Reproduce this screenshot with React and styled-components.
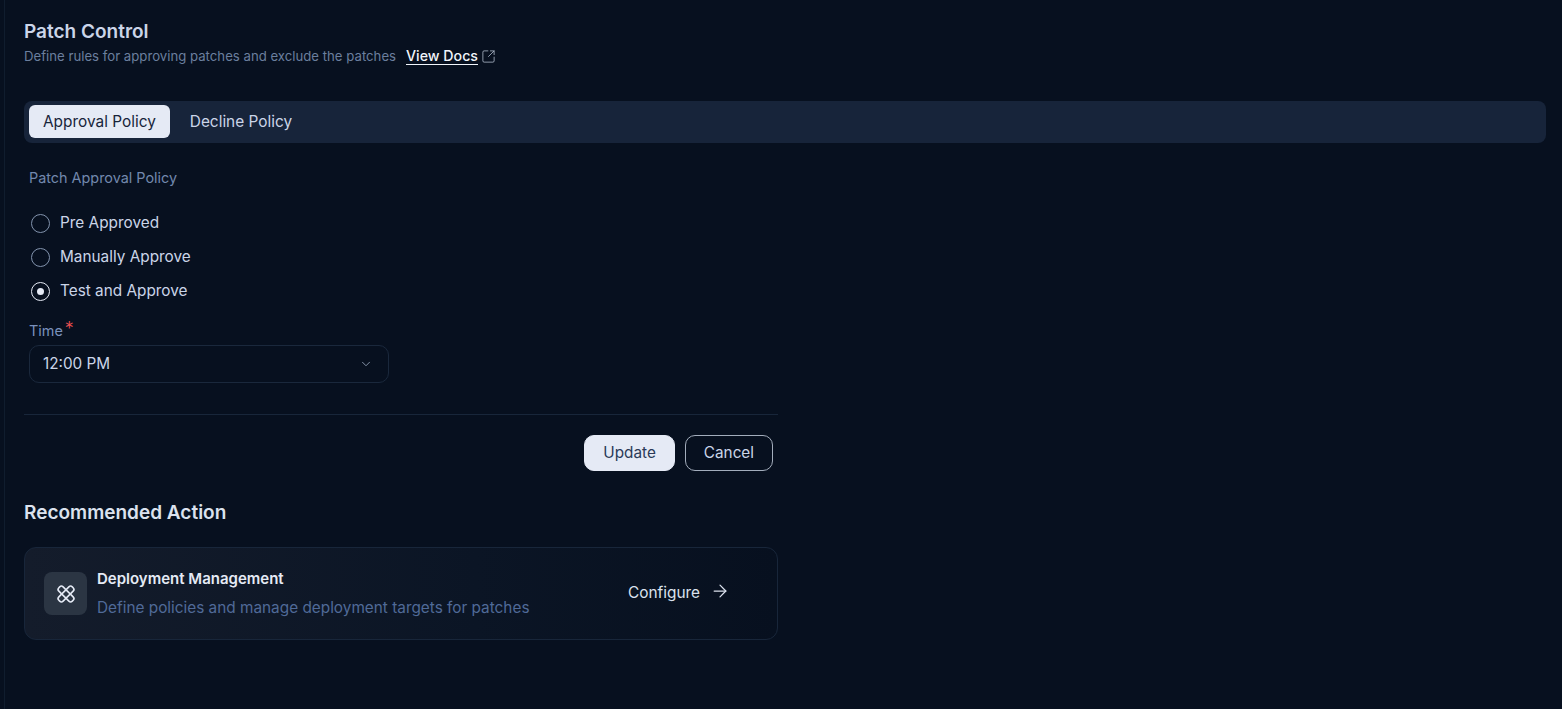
import React from 'react';
import styled, { createGlobalStyle } from 'styled-components';
import { ArrowRight, ChevronDown, SquareArrowOutUpRight } from 'lucide-react';

const GlobalStyle = createGlobalStyle`
  html, body {
    margin: 0;
    padding: 0;
    height: 100%;
    background: #07101f;
  }
  * { box-sizing: border-box; }
  body {
    font-family: Inter, "Liberation Sans", sans-serif;
  }
`;

const options = ['Pre Approved', 'Manually Approve', 'Test and Approve'];

function PatchIcon() {
  return (
    <svg width="20" height="20" viewBox="0 0 20 20" fill="none" stroke="#e5eaf5" strokeWidth="1.6">
      <rect x="-3" y="-9.5" width="6" height="19" rx="2.4" transform="translate(10 10) rotate(45)" />
      <rect x="-3" y="-9.5" width="6" height="19" rx="2.4" transform="translate(10 10) rotate(-45)" />
    </svg>
  );
}

export default function App() {
  return (
    <Page>
      <GlobalStyle />
      <Title>Patch Control</Title>
      <Subtitle>
        Define rules for approving patches and exclude the patches
        <DocsLink href="#">View Docs</DocsLink>
        <SquareArrowOutUpRight size={15} strokeWidth={1.25} color="#b4bfd0" />
      </Subtitle>

      <Tabs>
        <Tab $active>Approval Policy</Tab>
        <Tab>Decline Policy</Tab>
      </Tabs>

      <Form>
        <PolicyLabel>Patch Approval Policy</PolicyLabel>
        <RadioGroup>
          {options.map((option, i) => (
            <RadioRow key={option}>
              <Radio $checked={i === 2} />
              {option}
            </RadioRow>
          ))}
        </RadioGroup>
        <TimeLabel>
          Time<Required>*</Required>
        </TimeLabel>
        <Select>
          12:00 PM
          <ChevronDown size={14} strokeWidth={1.5} color="#94a3b8" />
        </Select>
      </Form>

      <Footer>
        <Button $primary>Update</Button>
        <Button>Cancel</Button>
      </Footer>

      <SectionTitle>Recommended Action</SectionTitle>
      <Card>
        <IconBox>
          <PatchIcon />
        </IconBox>
        <CardText>
          <CardTitle>Deployment Management</CardTitle>
          <CardDesc>Define policies and manage deployment targets for patches</CardDesc>
        </CardText>
        <Configure>
          Configure
          <ArrowRight size={20} strokeWidth={1.5} />
        </Configure>
      </Card>
    </Page>
  );
}

const Page = styled.main`
  min-height: 709px;
  margin-left: 4px;
  padding: 20px 16px 0 19px;
  border-left: 1px solid #101d2e;
  background: #07101f;
`;

const Title = styled.h1`
  margin: 0;
  font-size: 19px;
  line-height: 23px;
  font-weight: 600;
  color: #cbd5e8;
`;

const Subtitle = styled.p`
  display: flex;
  align-items: center;
  margin: 3px 0 0;
  height: 20px;
  font-size: 13.2px;
  color: #6b7f9e;
`;

const DocsLink = styled.a`
  margin: 0 3px 0 10px;
  font-size: 14.2px;
  font-weight: 500;
  line-height: 17px;
  color: #f1f5fb;
  text-decoration: none;
  border-bottom: 1px solid #f1f5fb;
`;

const Tabs = styled.div`
  display: flex;
  gap: 6px;
  margin-top: 35px;
  padding: 4px 5px 5px;
  height: 42px;
  border-radius: 8px;
  background: #17243a;
`;

const Tab = styled.button`
  padding: 0 14px;
  height: 33px;
  border: 0;
  border-radius: 6px;
  font: 400 15.4px Inter, sans-serif;
  color: ${(p) => (p.$active ? '#17243a' : '#cbd5e8')};
  background: ${(p) => (p.$active ? '#e5eaf5' : 'transparent')};
`;

const Form = styled.section`
  padding: 0 0 31px 5px;
  width: 754px;
  border-bottom: 1px solid #18263a;
`;

const PolicyLabel = styled.div`
  margin-top: 26px;
  font-size: 14.4px;
  line-height: 18px;
  color: #7288ad;
`;

const RadioGroup = styled.div`
  display: flex;
  flex-direction: column;
  gap: 10px;
  margin-top: 23px;
  padding-left: 2px;
`;

const RadioRow = styled.label`
  display: flex;
  align-items: center;
  gap: 10px;
  height: 24px;
  font-size: 15.35px;
  color: #cbd5e8;
`;

const Radio = styled.span`
  display: flex;
  align-items: center;
  justify-content: center;
  margin-top: 2px;
  width: 19px;
  height: 19px;
  border-radius: 50%;
  border: 1px solid ${(p) => (p.$checked ? '#e5eaf5' : '#8293ad')};
  &::after {
    content: '';
    display: ${(p) => (p.$checked ? 'block' : 'none')};
    width: 7px;
    height: 7px;
    border-radius: 50%;
    background: #e5eaf5;
  }
`;

const TimeLabel = styled.div`
  margin-top: 19px;
  font-size: 14.4px;
  line-height: 18px;
  color: #7a90bb;
`;

const Required = styled.span`
  position: relative;
  top: -1px;
  margin-left: 2px;
  font-size: 18px;
  font-weight: 300;
  line-height: 1;
  color: #f05252;
`;

const Select = styled.div`
  display: flex;
  align-items: center;
  justify-content: space-between;
  margin-top: 5px;
  padding: 0 15px 1px 13px;
  width: 360px;
  height: 38px;
  border: 1px solid #1a283c;
  border-radius: 10px;
  font-size: 15.3px;
  color: #cbd5e8;
`;

const Footer = styled.div`
  display: flex;
  justify-content: flex-end;
  gap: 10px;
  padding-right: 5px;
  margin-top: 20px;
  width: 754px;
`;

const Button = styled.button`
  padding: 0 18px 2px;
  height: 36px;
  border-radius: 10px;
  border: 1px solid ${(p) => (p.$primary ? '#e5eaf5' : '#a3adbc')};
  font: 400 15.3px Inter, sans-serif;
  color: ${(p) => (p.$primary ? '#2a3a58' : '#cbd5e8')};
  background: ${(p) => (p.$primary ? '#e5eaf5' : 'transparent')};
`;

const SectionTitle = styled.h2`
  margin: 30px 0 0;
  font-size: 19px;
  line-height: 24px;
  font-weight: 600;
  color: #dbe2ee;
`;

const Card = styled.div`
  display: flex;
  align-items: center;
  gap: 10px;
  margin-top: 22px;
  padding: 0 47px 0 19px;
  width: 754px;
  height: 93px;
  border: 1px solid #18263a;
  border-radius: 12px;
  background: linear-gradient(90deg, #141c2b 0%, #0b1525 60%, #07101f 100%);
`;

const IconBox = styled.div`
  display: flex;
  align-items: center;
  justify-content: center;
  width: 43px;
  height: 43px;
  border-radius: 8px;
  background: #2b3543;
`;

const CardText = styled.div`
  display: flex;
  flex-direction: column;
  gap: 10px;
  flex: 1;
  margin-top: 1px;
`;

const CardTitle = styled.div`
  font-size: 15px;
  line-height: 18px;
  font-weight: 600;
  color: #e5eaf5;
`;

const CardDesc = styled.div`
  font-size: 15.35px;
  line-height: 20px;
  color: #506a98;
`;

const Configure = styled.div`
  display: flex;
  align-items: center;
  gap: 10px;
  margin-top: -2px;
  font-size: 15.4px;
  color: #dbe2ee;
  svg {
    margin-top: -3px;
  }
`;
